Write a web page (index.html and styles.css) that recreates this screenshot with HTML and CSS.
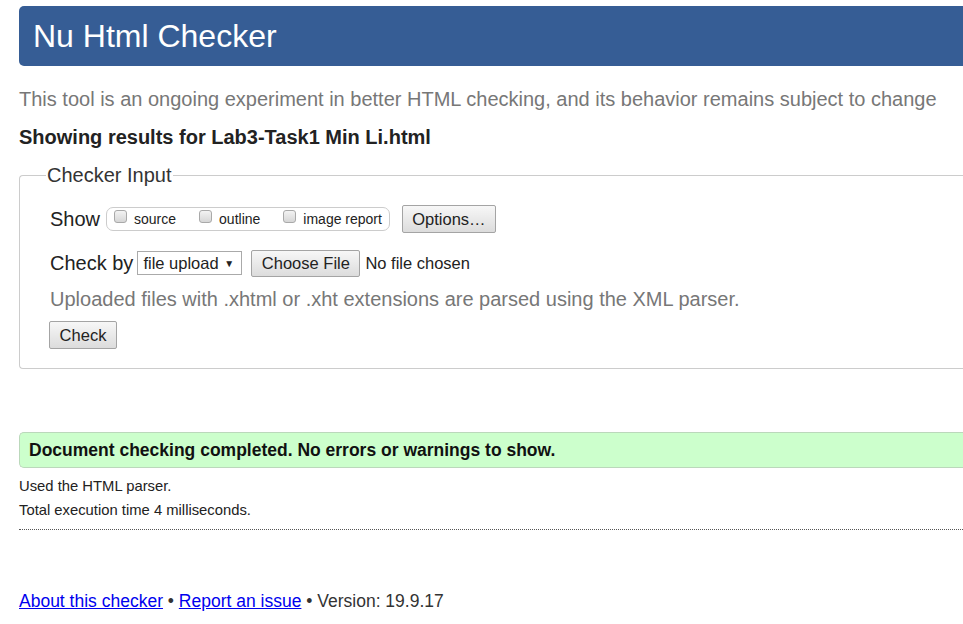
FILE: index.html
```html
<!DOCTYPE html>
<html>
<head>
<meta charset="utf-8">
<link rel="stylesheet" href="styles.css">
</head>
<body>
<div class="page">
  <h1 class="header">Nu Html Checker</h1>
  <p class="intro">This tool is an ongoing experiment in better HTML checking, and its behavior remains subject to change</p>
  <p class="showing">Showing results for Lab3-Task1 Min Li.html</p>
  <fieldset class="input">
    <legend>Checker Input</legend>
    <div class="row show-row">
      <span class="lbl">Show</span>
      <span class="opts">
        <label class="opt"><span class="cb"></span>source</label>
        <label class="opt"><span class="cb"></span>outline</label>
        <label class="opt"><span class="cb"></span>image report</label>
      </span>
      <span class="btn options">Options…</span>
    </div>
    <div class="row by-row">
      <span class="lbl">Check by</span>
      <span class="select">file upload <span class="arrow">▼</span></span>
      <span class="btn choose">Choose File</span>
      <span class="nofile">No file chosen</span>
    </div>
    <p class="hint">Uploaded files with .xhtml or .xht extensions are parsed using the XML parser.</p>
    <div class="row"><span class="btn check">Check</span></div>
  </fieldset>
  <p class="success">Document checking completed. No errors or warnings to show.</p>
  <p class="small first">Used the HTML parser.</p>
  <p class="small">Total execution time 4 milliseconds.</p>
  <hr class="dots">
  <p class="footer"><a href="#">About this checker</a> • <a href="#">Report an issue</a> • Version: 19.9.17</p>
</div>
</body>
</html>
```
FILE: styles.css
```css
html { overflow: hidden; }
body {
  margin: 0;
  font-family: "Liberation Sans", Arial, sans-serif;
  color: #222;
  background: #fff;
}
.page {
  width: 1100px;
  padding: 6px 0 0 19px;
}
.header {
  margin: 0;
  height: 60px;
  box-sizing: border-box;
  background: #365d95;
  color: #fff;
  font-weight: normal;
  font-size: 32px;
  line-height: 60px;
  padding-left: 14px;
  border-radius: 5px 0 0 5px;
}
.intro {
  margin: 19px 0 0;
  font-size: 20px;
  line-height: 28px;
  color: #777;
}
.showing {
  margin: 12px 0 0;
  font-size: 20px;
  font-weight: bold;
  line-height: 24px;
  color: #222;
}
.input {
  margin: 15px 0 0;
  padding: 17px 0 19px 30px;
  border: 1px solid #ccc;
  border-right: none;
  border-radius: 4px 0 0 4px;
  min-width: 0;
}
.input legend {
  font-size: 20px;
  line-height: 23px;
  padding: 0 1px;
  margin-left: -4px;
  color: #333;
}
.row {
  display: flex;
  align-items: center;
}
.lbl {
  font-size: 20px;
  color: #222;
}
.show-row { height: 30px; }
.opts {
  display: inline-flex;
  align-items: center;
  margin-left: 6px;
  height: 24px;
  box-sizing: border-box;
  border: 1px solid #ccc;
  border-radius: 7px;
  padding: 0 7px 0 7px;
  font-size: 14px;
  color: #222;
}
.opt {
  display: inline-flex;
  align-items: center;
  margin-right: 23px;
}
.opt:last-child { margin-right: 0; }
.cb {
  width: 13px;
  height: 13px;
  box-sizing: border-box;
  border: 1px solid #a9a9a9;
  border-radius: 3px;
  background: linear-gradient(#f3f3f3, #d6d6d6);
  margin-right: 7px;
  position: relative;
  top: -3px;
}
.btn {
  display: inline-block;
  box-sizing: border-box;
  border: 1px solid #a4a4a4;
  border-radius: 2px;
  background: linear-gradient(#f7f7f7, #dcdcdc);
  font-size: 16.5px;
  color: #222;
  text-align: center;
}
.options {
  margin-left: 12px;
  width: 94px;
  height: 28px;
  line-height: 26px;
}
.by-row {
  margin-top: 15px;
  height: 28px;
}
.select {
  margin-left: 4px;
  width: 105px;
  height: 24px;
  line-height: 22px;
  box-sizing: border-box;
  border: 1px solid #aaa;
  background: #fff;
  font-size: 16.5px;
  padding-left: 5px;
  color: #222;
  white-space: nowrap;
}
.arrow {
  font-size: 10px;
  position: relative;
  top: -2px;
  margin-left: 1px;
}
.choose {
  margin-left: 9px;
  width: 109px;
  height: 27px;
  line-height: 25px;
}
.nofile {
  margin-left: 5px;
  font-size: 16.5px;
  color: #222;
}
.hint {
  margin: 9px 0 0;
  font-size: 20px;
  line-height: 26px;
  color: #777;
}
.check {
  margin-top: 9px;
  margin-left: -1px;
  width: 68px;
  height: 28px;
  line-height: 26px;
}
.success {
  margin: 63px 0 0;
  height: 36px;
  box-sizing: border-box;
  background: #ccffcc;
  border: 1px solid #bbd8bb;
  border-right: none;
  border-radius: 5px 0 0 5px;
  padding-left: 9px;
  font-size: 17.5px;
  font-weight: bold;
  line-height: 34px;
  color: #111;
}
.small {
  margin: 7px 0 0;
  font-size: 14.8px;
  line-height: 17px;
  color: #222;
}
.small.first { margin-top: 10px; }
.dots {
  margin: 10px 0 0;
  border: none;
  border-top: 1px dotted #555;
  height: 0;
}
.footer {
  margin: 61px 0 0;
  font-size: 17.5px;
  line-height: 20px;
  color: #333;
}
.footer a { color: #0000ee; }
```
